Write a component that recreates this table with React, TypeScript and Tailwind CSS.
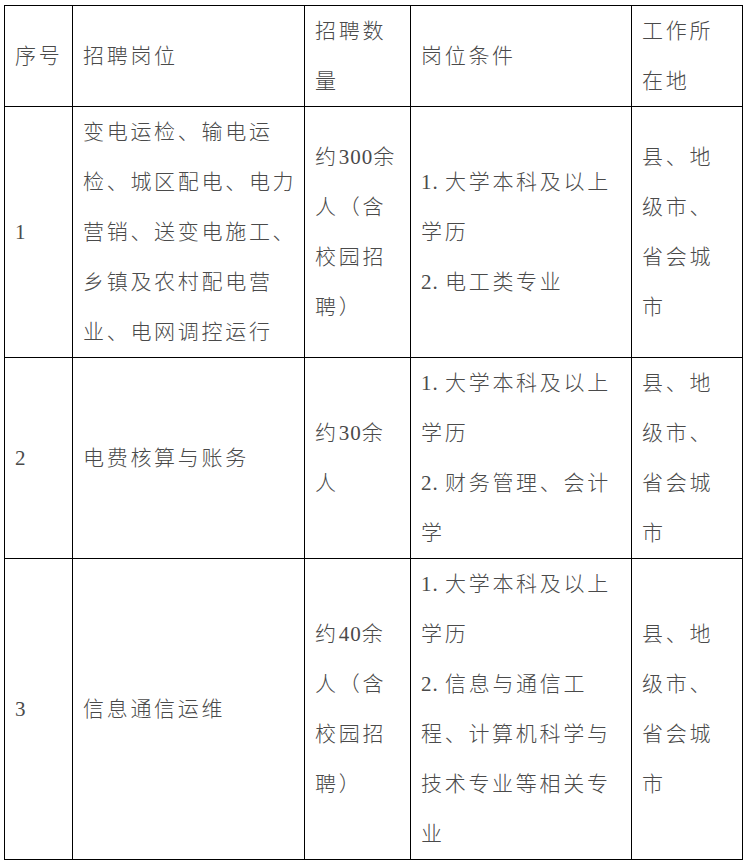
import React from "react";

const Txt = ({ s }: { s: string }) => (
  <>
    {s.split(/([0-9. ]+)/).map((p, i) =>
      /^[0-9. ]+$/.test(p) ? (
        <span key={i} className="tracking-[1px]">
          {p}
        </span>
      ) : (
        <React.Fragment key={i}>{p}</React.Fragment>
      )
    )}
  </>
);

const Cell = ({ lines }: { lines: string[] }) => (
  <td className="border border-black px-[10px] py-0 align-middle">
    {lines.map((l, i) => (
      <div key={i} className="h-[50px] leading-[50px] whitespace-nowrap">
        <Txt s={l} />
      </div>
    ))}
  </td>
);

const rows: { h: string; cells: string[][] }[] = [
  {
    h: "h-[251px]",
    cells: [
      ["1"],
      ["变电运检、输电运", "检、城区配电、电力", "营销、送变电施工、", "乡镇及农村配电营", "业、电网调控运行"],
      ["约300余", "人（含", "校园招", "聘）"],
      ["1. 大学本科及以上", "学历", "2. 电工类专业"],
      ["县、地", "级市、", "省会城", "市"],
    ],
  },
  {
    h: "h-[200px]",
    cells: [
      ["2"],
      ["电费核算与账务"],
      ["约30余", "人"],
      ["1. 大学本科及以上", "学历", "2. 财务管理、会计", "学"],
      ["县、地", "级市、", "省会城", "市"],
    ],
  },
  {
    h: "h-[301px]",
    cells: [
      ["3"],
      ["信息通信运维"],
      ["约40余", "人（含", "校园招", "聘）"],
      ["1. 大学本科及以上", "学历", "2. 信息与通信工", "程、计算机科学与", "技术专业等相关专", "业"],
      ["县、地", "级市、", "省会城", "市"],
    ],
  },
];

export default function App() {
  return (
    <div className="w-[748px] h-[868px] bg-white pt-[5px] pl-[4px]">
      <table
        className="table-fixed border-collapse w-[738px] text-[21px] tracking-[2.7px] text-[#4a4a4a]"
        style={{ fontFamily: '"Liberation Serif", "Noto Sans CJK SC", serif', fontWeight: 300 }}
      >
        <colgroup>
          <col className="w-[68px]" />
          <col className="w-[232px]" />
          <col className="w-[106px]" />
          <col className="w-[221px]" />
          <col className="w-[111px]" />
        </colgroup>
        <tbody>
          <tr className="h-[101px]">
            <Cell lines={["序号"]} />
            <Cell lines={["招聘岗位"]} />
            <Cell lines={["招聘数", "量"]} />
            <Cell lines={["岗位条件"]} />
            <Cell lines={["工作所", "在地"]} />
          </tr>
          {rows.map((r, i) => (
            <tr key={i} className={r.h}>
              {r.cells.map((c, j) => (
                <Cell key={j} lines={c} />
              ))}
            </tr>
          ))}
        </tbody>
      </table>
    </div>
  );
}
